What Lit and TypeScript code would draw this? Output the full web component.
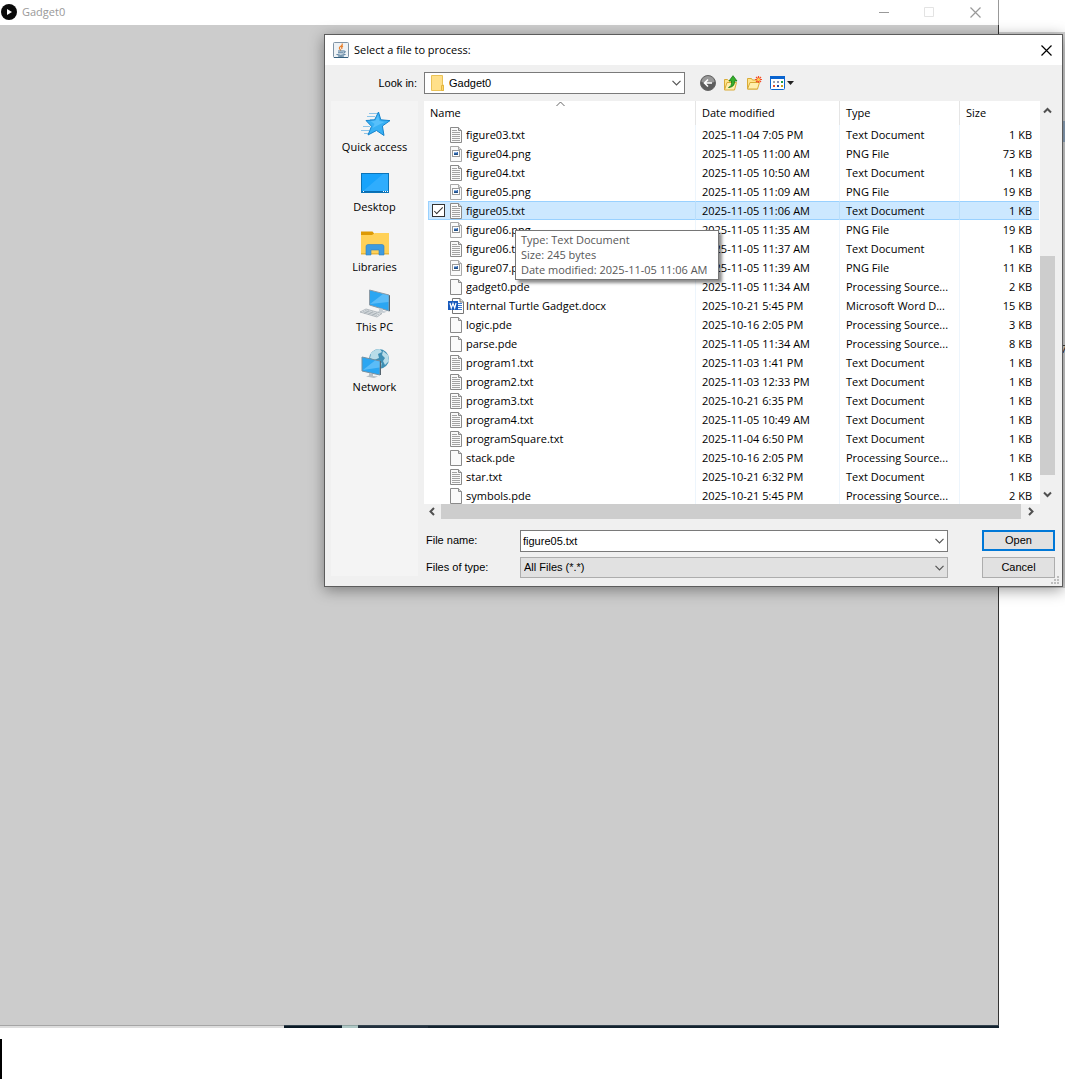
import { LitElement, html, svg, css, nothing, TemplateResult } from "lit";
import { customElement, property, state } from "lit/decorators.js";
import { classMap } from "lit/directives/class-map.js";

type Kind = "txt" | "png" | "pde" | "docx";

interface FileRow {
  name: string;
  modified: string;
  type: string;
  size: string;
  kind: Kind;
}

const TXT = "Text Document";
const PNG = "PNG File";
const PDE = "Processing Source...";

const row = (name: string, modified: string, type: string, size: string): FileRow => ({
  name,
  modified,
  type,
  size,
  kind: name.split(".").pop() as Kind,
});

const FILES: FileRow[] = [
  row("figure03.txt", "2025-11-04 7:05 PM", TXT, "1 KB"),
  row("figure04.png", "2025-11-05 11:00 AM", PNG, "73 KB"),
  row("figure04.txt", "2025-11-05 10:50 AM", TXT, "1 KB"),
  row("figure05.png", "2025-11-05 11:09 AM", PNG, "19 KB"),
  row("figure05.txt", "2025-11-05 11:06 AM", TXT, "1 KB"),
  row("figure06.png", "2025-11-05 11:35 AM", PNG, "19 KB"),
  row("figure06.txt", "2025-11-05 11:37 AM", TXT, "1 KB"),
  row("figure07.png", "2025-11-05 11:39 AM", PNG, "11 KB"),
  row("gadget0.pde", "2025-11-05 11:34 AM", PDE, "2 KB"),
  row("Internal Turtle Gadget.docx", "2025-10-21 5:45 PM", "Microsoft Word D...", "15 KB"),
  row("logic.pde", "2025-10-16 2:05 PM", PDE, "3 KB"),
  row("parse.pde", "2025-11-05 11:34 AM", PDE, "8 KB"),
  row("program1.txt", "2025-11-03 1:41 PM", TXT, "1 KB"),
  row("program2.txt", "2025-11-03 12:33 PM", TXT, "1 KB"),
  row("program3.txt", "2025-10-21 6:35 PM", TXT, "1 KB"),
  row("program4.txt", "2025-11-05 10:49 AM", TXT, "1 KB"),
  row("programSquare.txt", "2025-11-04 6:50 PM", TXT, "1 KB"),
  row("stack.pde", "2025-10-16 2:05 PM", PDE, "1 KB"),
  row("star.txt", "2025-10-21 6:32 PM", TXT, "1 KB"),
  row("symbols.pde", "2025-10-21 5:45 PM", PDE, "2 KB"),
];

const page = svg`
  <path d="M2.500 .5H10.500L13.500 3.500v12h-11z" fill="#fafafa" stroke="#8a8a8a"/>
  <path d="M10.500 .5V3.500h3" fill="#d8d8d8" stroke="#8a8a8a"/>`;

const fileIcons: Record<Kind, TemplateResult> = {
  pde: html`<svg class="icon" viewBox="0 0 16 16">${page}</svg>`,
  txt: html`<svg class="icon" viewBox="0 0 16 16">
    ${page}
    <path d="M4 3.500h5M4 5.500h8M4 7.500h8M4 9.500h8M4 11.500h8M4 13.500h8" stroke="#a3a3a3" fill="none" />
  </svg>`,
  png: html`<svg class="icon" viewBox="0 0 16 16">
    <path d="M2.500 .5H10.500L13.500 3.500v12h-11z" fill="#fafafa" stroke="#a8a8a8" />
    <path d="M10.500 .5V3.500h3" fill="#dedede" stroke="#a8a8a8" />
    <rect x="4.500" y="4.500" width="7" height="6" fill="#fff" stroke="#9a9a9a" />
    <rect x="6" y="6" width="4" height="3" fill="#3f6fb4" />
    <path d="M6 6h3v1H6z" fill="#8fb5e4" />
    <path d="M6 9V8l2-.5 2 .5v1z" fill="#1f4f86" />
  </svg>`,
  docx: html`<svg class="icon" viewBox="0 0 16 16">
    <path d="M4.500 .5H12L15.500 4v11.500h-11z" fill="#fff" stroke="#777" />
    <path d="M12 .5V4h3.500" fill="#e4e4e4" stroke="#777" />
    <path d="M9 5.500h5M9 7.500h5M9 9.500h5M9 11.500h5" stroke="#3b78cf" />
    <rect y="3" width="10" height="9" fill="#185abd" />
    <path d="M2 5l1.300 5L5 5.500l1.700 4.500L8 5" fill="none" stroke="#fff" stroke-width="1.200" />
  </svg>`,
};

const placeIcons: Record<string, TemplateResult> = {
  "Quick access": html`<svg class="big" viewBox="0 0 32 32">
    <path d="M10 6.500h9M8 9.500h8M11 12.500h5M4 19.500h7M2 23.500h8M5 26.500h5" stroke="#8cc4e8" fill="none" />
    <path d="M19.500 5l2.300 7.800 9.200.8-7.600 5.400 1.600 9.500-7.500-5-8.500 4.500 3.500-8.700-5.500-5.800 8.500-.5z"
      fill="#37b0f4" stroke="#1583cc" />
    <path d="M19 8l1.500 6 5 1-12 6 2-4-4-3 5-.5z" fill="#6dcbff" opacity=".6" />
  </svg>`,
  Desktop: html`<svg class="big" viewBox="0 0 32 32">
    <rect x="2.500" y="6.500" width="27" height="19" fill="#18a3fb" stroke="#0b74b8" />
    <path d="M3 25L24 7h5v18z" fill="#40b4ff" opacity=".6" />
    <path d="M3 24.500h26" stroke="#0a6cb0" />
    <path d="M4 24.500h1M24 24.500h1M26 24.500h1M28 24.500h1" stroke="#fff" />
  </svg>`,
  Libraries: html`<svg class="big" viewBox="0 0 32 32">
    <path d="M2 4.500h11.500l2 2.500-2 3H2z" fill="#dd9a05" />
    <path d="M2 8h11l3-2h14v21H2z" fill="#ffd158" />
    <path d="M2 26h28v1.500H2z" fill="#eab63a" />
    <path d="M7 28V19.500q0-2 2-2h14q2 0 2 2V28h-5v-5h-8v5z" fill="#3e9be0" stroke="#2b80c2" stroke-width=".6" />
  </svg>`,
  "This PC": html`<svg class="big" viewBox="0 0 32 32">
    <path d="M10.500 3l19.500 5v16l-19.500-6z" fill="#2ba6f2" stroke="#8b9aa6" />
    <path d="M11 17L24 7l5.500 1.500V15z" fill="#7ccbfb" opacity=".6" />
    <path d="M30 8l1 .5V24l-1 .5z" fill="#55646f" />
    <path d="M20 21l4 1v2l4 .5-3 1.500-7-1 2-1z" fill="#c5cdd3" />
    <path d="M1 25l6-3 16 4.500-5 3.500z" fill="#dfe3e6" stroke="#a4acb2" stroke-width=".8" />
    <path d="M4 24.500l14 4M6 23.500l14 4M5 26.500l5-3M9 27.500l5-3M13 28.500l5-3" stroke="#a4acb2" stroke-width=".7" />
  </svg>`,
  Network: html`<svg class="big" viewBox="0 0 32 32">
    <circle cx="20" cy="12" r="10" fill="#3e8fb4" />
    <path d="M12 6q4-4 9-4l2 3-4 2 1 4-5 2-4-2zM24 4l5 4 1 6-4 4-2-4 2-3-3-3z" fill="#b8dde9" />
    <path d="M18 14l5 2-1 5-4-2z" fill="#8dc6da" />
    <path d="M3 10l18 4v14L3 24z" fill="#2ba6f2" stroke="#78909f" />
    <path d="M4 23L16 13.500l4.500 1v6z" fill="#7ccbfb" opacity=".6" />
    <path d="M21.500 14v14" stroke="#55646f" />
    <path d="M10 26l4 1v2l5 .5-4 1.500-8-1.500 3-1z" fill="#b5bec5" />
  </svg>`,
};

const chevron = html`<svg class="chevron" viewBox="0 0 9 6"><path d="M.5 .8l4 4 4-4" fill="none" stroke="#555" stroke-width="1.200" /></svg>`;
const arrow = (d: string) => html`<svg class="arrow" viewBox="0 0 9 9"><path d="${d}" fill="none" stroke="#505050" stroke-width="2" /></svg>`;

@customElement("file-dialog")
export class FileDialog extends LitElement {
  @property({ attribute: false }) files: FileRow[] = [];
  @state() private selected = "figure05.txt";

  static styles = css`
    :host {
      display: flex;
      flex-direction: column;
      box-sizing: border-box;
      border: 1px solid #5c5c5c;
      background: #f0f0f0;
      color: #000;
      font: 11px/15px "Open Sans", sans-serif;
      box-shadow: 0 3px 14px rgba(0, 0, 0, 0.4);
    }
    button, input, select { font: inherit; color: inherit; margin: 0; border-radius: 0; }
    button { padding: 0; border: 0; background: none; display: flex; align-items: center; justify-content: center; }
    svg { display: block; flex: none; }
    .classic { font-family: "Liberation Sans", Arial, sans-serif; }
    .title { display: flex; align-items: center; height: 30px; padding: 0 10px 0 8px; gap: 5px; background: #fff; box-sizing: border-box; }
    .title h1 { flex: 1; margin: 0; padding-bottom: 2px; font-size: 11px; font-weight: 400; }
    .body { display: grid; grid-template-columns: 87px minmax(0, 1fr); gap: 7px 6px; padding: 7px 7px 8px 6px; }
    .caption { text-align: right; padding-right: 1px; line-height: 22px; }
    .look { display: flex; align-items: center; gap: 15px; }
    .combo { position: relative; display: flex; align-items: center; height: 22px; box-sizing: border-box; }
    .combo select, .combo input {
      appearance: none; width: 100%; height: 100%; box-sizing: border-box;
      border: 1px solid #7a7a7a; background: #fff; padding: 0 24px 0 3px; outline: none;
    }
    .combo input { padding-left: 2px; }
    .combo .chevron { position: absolute; right: 4px; width: 9px; height: 6px; pointer-events: none; }
    .combo .open { position: absolute; right: 1px; top: 1px; width: 20px; height: 20px; }
    .combo .folder { position: absolute; left: 6px; }
    .look .combo { width: 261px; }
    .look select { padding-left: 24px; }
    .combo.grey { height: 21px; }
    .combo.grey select { background: #e1e1e1; border-color: #adadad; }
    .tools { display: flex; align-items: center; gap: 7px; }
    .places { background: #f4f4f4; padding-top: 6px; margin-bottom: 2px; display: flex; flex-direction: column; gap: 12px; }
    .place { flex-direction: column; line-height: 16px; width: 100%; }
    .big { width: 32px; height: 32px; }
    .right { display: flex; flex-direction: column; gap: 11px; }
    .list { position: relative; display: grid; grid-template-columns: minmax(0, 1fr) 15px; }
    .view { background: #fff; height: 403px; overflow: hidden; padding: 0 1px 0 4px; position: relative; }
    table { width: 100%; border-collapse: separate; border-spacing: 0; table-layout: fixed; }
    th, td { padding: 0 0 0 6px; font-weight: 400; text-align: left; white-space: nowrap; overflow: hidden; }
    th { height: 24px; padding-bottom: 2px; border-right: 1px solid #e5e5e5; box-sizing: border-box; }
    th.name { padding-left: 2px; }
    td { height: 19px; border-right: 1px solid #edf5fc; box-sizing: border-box; line-height: 19px; }
    th:last-child, td:last-child { border-right: 0; }
    .date { width: 144px; }
    .type { width: 120px; }
    .size { width: 79px; }
    td.size { text-align: right; padding-right: 7px; }
    td.name { padding-left: 4px; }
    .cell { display: grid; grid-template-columns: 14px 16px 1fr; column-gap: 2px; align-items: center; height: 19px; }
    .cell .label { margin-right: 4px; overflow: hidden; text-overflow: ellipsis; }
    .icon { width: 16px; height: 16px; }
    .chosen td { background: #cce8ff; border-right-color: #b9defb; box-shadow: inset 0 1px #99d1ff, inset 0 -1px #99d1ff; }
    .chosen td.name { box-shadow: inset 0 1px #99d1ff, inset 0 -1px #99d1ff, inset 1px 0 #99d1ff; }
    .tick { appearance: none; width: 13px; height: 13px; border: 1px solid #333; background: #fff; display: grid; place-items: center; }
    .tick:checked::before { content: ""; width: 9px; height: 4px; box-sizing: border-box; border: solid #333; border-width: 0 0 1px 1px; transform: rotate(-45deg) translate(1px, -1px); }
    .sort { position: absolute; left: 132px; top: 0; width: 9px; height: 6px; }
    .arrow { width: 9px; height: 9px; }
    .vbar { display: flex; flex-direction: column; }
    .vbar button { height: 19px; }
    .vbar .track { flex: 1; display: flex; flex-direction: column; }
    .vbar .before { flex: 136; }
    .vbar .thumb { flex: 219; background: #cdcdcd; }
    .vbar .after { flex: 10; }
    .hbar { grid-column: 1 / -1; display: flex; height: 15px; }
    .hbar .thumb { flex: 1; background: #cdcdcd; }
    .hbar button { width: 17px; }
    .hbar .next { width: 19px; }
    .hbar .corner { width: 15px; }
    .tooltip {
      position: absolute; left: 91px; top: 129px; padding: 1px 10px 2px 5px; border: 1px solid #767676;
      background: #fff; color: #575757; white-space: nowrap; box-shadow: 3px 3px 3px rgba(0, 0, 0, 0.45);
    }
    .tooltip div { line-height: 15px; }
    .form { display: grid; grid-template-columns: 88px minmax(0, 1fr) 73px; column-gap: 6px; row-gap: 5px; align-items: start; padding-left: 2px; }
    .form label { line-height: 21px; }
    .form .combo { margin-right: 28px; }
    .push { height: 21px; background: #e1e1e1; border: 1px solid #adadad; }
    .push.default { border: 2px solid #0078d7; }
    .grip { position: absolute; right: 3px; bottom: 2px; width: 8px; height: 8px; }
  `;

  render() {
    return html`
      <header class="title">
        <svg width="16" height="16" viewBox="0 0 16 16">
          <rect x=".5" y=".5" width="15" height="15" rx="1" fill="#eef2f5" stroke="#7f93a5" />
          <path d="M1 15.500h14" stroke="#35607f" />
          <path d="M9 1.500q1 1.500-1.500 3T8 8.500M10 4q-2 1-1 3" fill="none" stroke="#e8812e" stroke-width="1.200" />
          <path d="M5 9h6M5 10.800h5.500M11 9q2 0 1 1.500l-1.500 .8M3.500 12.500q4 1.500 9 0M5 14q3 .6 6 0" fill="none" stroke="#4c7697" />
        </svg>
        <h1>Select a file to process:</h1>
        <button aria-label="Close">
          <svg width="11" height="11" viewBox="0 0 11 11"><path d="M.5 .5l10 10M10.500 .5l-10 10" stroke="#000" stroke-width="1.200" /></svg>
        </button>
      </header>
      <div class="body">
        <label class="caption classic" for="look">Look in:</label>
        <div class="look classic">
          <div class="combo">
            <select id="look"><option>Gadget0</option></select>
            <svg class="folder" width="16" height="16" viewBox="0 0 16 16">
              <path d="M1.500 .5h11V10h1v5.500h-12z" fill="#ffe08a" stroke="#eac257" />
              <path d="M11.500 15.500V10.500h2v5z" fill="#ffd66b" stroke="#e3b640" />
            </svg>
            ${chevron}
          </div>
          <div class="tools">${this.tools()}</div>
        </div>
        <nav class="places" aria-label="Places">
          ${Object.entries(placeIcons).map(([name, icon]) => html`<button class="place">${icon}<span>${name}</span></button>`)}
        </nav>
        <div class="right">
          <div class="list">
            <div class="view">
              <svg class="sort" viewBox="0 0 9 6"><path d="M.5 5l4-4 4 4" fill="none" stroke="#666" /></svg>
              <table>
                <thead>
                  <tr><th class="name">Name</th><th class="date">Date modified</th><th class="type">Type</th><th class="size">Size</th></tr>
                </thead>
                <tbody>${this.files.map((f) => this.fileRow(f))}</tbody>
              </table>
            </div>
            <div class="vbar">
              <button aria-label="Scroll up">${arrow("M1 6.500l3.500-3.500L8 6.500")}</button>
              <div class="track"><div class="before"></div><div class="thumb"></div><div class="after"></div></div>
              <button aria-label="Scroll down">${arrow("M1 2.500l3.500 3.500L8 2.500")}</button>
            </div>
            <div class="hbar">
              <button aria-label="Scroll left">${arrow("M6 1L2.500 4.500 6 8")}</button>
              <div class="thumb"></div>
              <button class="next" aria-label="Scroll right">${arrow("M3 1l3.500 3.500L3 8")}</button>
              <div class="corner"></div>
            </div>
            <div class="tooltip" role="tooltip">
              <div>Type: Text Document</div>
              <div>Size: 245 bytes</div>
              <div>Date modified: 2025-11-05 11:06 AM</div>
            </div>
          </div>
          <div class="form classic">
            <label for="filename">File name:</label>
            <div class="combo">
              <input id="filename" type="text" .value=${this.selected} />
              <button class="open" aria-label="Recent names"></button>${chevron}
            </div>
            <button class="push default">Open</button>
            <label for="filetype">Files of type:</label>
            <div class="combo grey">
              <select id="filetype"><option>All Files (*.*)</option></select>${chevron}
            </div>
            <button class="push">Cancel</button>
          </div>
        </div>
      </div>
      <svg class="grip" viewBox="0 0 8 8">
        <path d="M6 0h2v2H6zM3 3h2v2H3zM6 3h2v2H6zM0 6h2v2H0zM3 6h2v2H3zM6 6h2v2H6z" fill="#bdbdbd" />
      </svg>
    `;
  }

  private tools() {
    return html`
      <button aria-label="Back">
        <svg width="16" height="16" viewBox="0 0 16 16">
          <circle cx="8" cy="8" r="7.500" fill="#5d5d5d" stroke="#666" />
          <path d="M1.500 7a6.500 6 0 0 1 13 0q-6 2-13 0z" fill="#999" />
          <path d="M12 8H5M8 4.500L4.500 8 8 11.500" stroke="#fff" stroke-width="1.600" fill="none" />
        </svg>
      </button>
      <button aria-label="Up one level">
        <svg width="16" height="16" viewBox="0 0 16 16">
          <path d="M1.500 4.500h3l1 1h5v9h-9z" fill="#ffe48c" stroke="#d9ab36" />
          <path d="M1.500 15L4 7.500h9.500L11.500 15z" fill="#ffefad" stroke="#d9ab36" />
          <path d="M5.500 12.500q3.500-1 3-6.500H6L10 .7 14 6h-2.500q.5 6-6 6.500z" fill="#36b02c" stroke="#167a14" stroke-width=".8" />
        </svg>
      </button>
      <button aria-label="Create new folder">
        <svg width="16" height="16" viewBox="0 0 16 16">
          <path d="M1.500 3.500h4l1 1.500h5v9h-10z" fill="#ffe48c" stroke="#d9ab36" />
          <path d="M1.500 14L4 7.500h9.500L11.500 14z" fill="#ffefad" stroke="#d9ab36" />
          <path d="M12.500 1v7M9 4.500h7M10 2l5 5M15 2l-5 5" stroke="#f4502a" stroke-width="1.200" />
          <circle cx="12.500" cy="4.500" r="1.500" fill="#ffd34d" />
        </svg>
      </button>
      <button aria-label="View menu">
        <svg width="26" height="16" viewBox="0 0 26 16">
          <rect x="1.500" y="1.500" width="14" height="13" rx="1" fill="#fff" stroke="#0a64cf" />
          <path d="M1 1h15v3H1z" fill="#0a64cf" />
          <path d="M4 6h2v2H4z" fill="#9aa3ae" /><path d="M8 6h2v2H8z" fill="#8890b0" /><path d="M12 6h2v2h-2z" fill="#1f9c46" />
          <path d="M4 10h2v2H4z" fill="#e04f28" /><path d="M8 10h2v2H8z" fill="#2247a8" /><path d="M12 10h2v2h-2z" fill="#c8a01c" />
          <path d="M18 6h7l-3.500 4z" fill="#222" />
        </svg>
      </button>
    `;
  }

  private fileRow(f: FileRow) {
    const chosen = f.name === this.selected;
    return html`<tr class=${classMap({ chosen })} @click=${() => (this.selected = f.name)}>
      <td class="name">
        <div class="cell">
          ${chosen ? html`<input class="tick" type="checkbox" checked aria-label=${f.name} />` : html`<span>${nothing}</span>`}
          ${fileIcons[f.kind]}<span class="label">${f.name}</span>
        </div>
      </td>
      <td>${f.modified}</td>
      <td>${f.type}</td>
      <td class="size">${f.size}</td>
    </tr>`;
  }
}

@customElement("app-root")
export class AppRoot extends LitElement {
  static styles = css`
    :host {
      display: flex; flex-direction: column; position: relative; min-height: 100vh; overflow: hidden;
      background: #fff; color: #999; font: 11px/15px "Open Sans", sans-serif;
    }
    .sketch { display: flex; flex-direction: column; flex: 1; margin-right: 66px; }
    .bar { display: flex; align-items: center; height: 25px; gap: 4px; padding: 0 17px 0 1px; background: #fff; border-right: 1px solid #999; }
    .bar h2 { flex: 1; margin: 0; padding-bottom: 2px; font-size: 11px; font-weight: 400; }
    .bar .controls { display: flex; gap: 35px; }
    .bar button { padding: 0; border: 0; background: none; display: flex; }
    .canvas { flex: 1; background: #ccc; border-right: 1px solid #333; }
    .edge { display: flex; height: 3px; margin-right: 66px; background: #14232f; }
    .edge div { box-sizing: border-box; border-top: 1px solid #34434e; }
    .edge .pale { width: 284px; background: #ddd; border-top-color: #a5a5a5; }
    .edge .deep { width: 58px; background: #0b1a26; }
    .edge .mint { width: 16px; background: #b0c9c6; border-top-color: #8fa5a3; }
    .edge .slate { width: 70px; background: #22303d; }
    .edge .rest { flex: 1; }
    .foot { height: 51px; display: flex; align-items: flex-end; }
    .caret { width: 2px; height: 40px; background: #000; }
    .behind { position: absolute; top: 32px; right: 0; width: 66px; height: 556px; background: #d2d2d2; overflow: hidden; }
    .behind .stripe { position: absolute; top: 89px; right: 0; width: 3px; height: 21px; background: #8fa5bd; }
    .behind .digit { position: absolute; top: 309px; right: -2px; color: #222; }
    file-dialog { position: absolute; top: 34px; left: 324px; right: 2px; }
  `;

  render() {
    return html`
      <section class="sketch">
        <header class="bar">
          <svg width="17" height="17" viewBox="0 0 17 17"><circle cx="8" cy="8" r="8" fill="#0a0a0a" /><path d="M6 5l5 3-5 3z" fill="#fff" /></svg>
          <h2>Gadget0</h2>
          <div class="controls">
            <button aria-label="Minimize"><svg width="11" height="11" viewBox="0 0 11 11"><path d="M1 5.500h10" stroke="#999" /></svg></button>
            <button aria-label="Maximize"><svg width="11" height="11" viewBox="0 0 11 11"><path d="M.5 .5h9v9h-9z" fill="none" stroke="#e3e3e3" /></svg></button>
            <button aria-label="Close"><svg width="11" height="11" viewBox="0 0 11 11"><path d="M.5 .5l10 10M10.500 .5l-10 10" stroke="#999" stroke-width="1.200" /></svg></button>
          </div>
        </header>
        <div class="canvas"></div>
      </section>
      <div class="edge">
        <div class="pale"></div><div class="deep"></div><div class="mint"></div><div class="slate"></div><div class="rest"></div>
      </div>
      <div class="foot"><div class="caret"></div></div>
      <div class="behind"><div class="stripe"></div><span class="digit">7</span></div>
      <file-dialog .files=${FILES}></file-dialog>
    `;
  }
}
